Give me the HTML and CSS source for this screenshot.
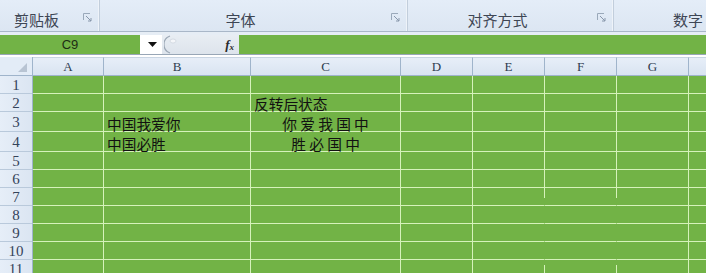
FILE: index.html
```html
<!DOCTYPE html>
<html lang="zh-CN">
<head>
<meta charset="utf-8">
<title>Excel</title>
<link rel="stylesheet" href="styles.css">
</head>
<body>
<div class="app">
  <div class="ribbon">
    <div class="group g1">
      <span class="glabel">剪贴板</span>
      <svg class="launcher" width="9" height="9" viewBox="0 0 9 9"><path d="M0.5 7V0.5H7" fill="none" stroke="#9aa9ba" stroke-width="1"/><path d="M3 3L8 8M5 8H8V5" fill="none" stroke="#8796aa" stroke-width="1"/></svg>
    </div>
    <div class="group g2">
      <span class="glabel">字体</span>
      <svg class="launcher" width="9" height="9" viewBox="0 0 9 9"><path d="M0.5 7V0.5H7" fill="none" stroke="#9aa9ba" stroke-width="1"/><path d="M3 3L8 8M5 8H8V5" fill="none" stroke="#8796aa" stroke-width="1"/></svg>
    </div>
    <div class="group g3">
      <span class="glabel">对齐方式</span>
      <svg class="launcher" width="9" height="9" viewBox="0 0 9 9"><path d="M0.5 7V0.5H7" fill="none" stroke="#9aa9ba" stroke-width="1"/><path d="M3 3L8 8M5 8H8V5" fill="none" stroke="#8796aa" stroke-width="1"/></svg>
    </div>
    <div class="group g4">
      <span class="glabel">数字</span>
    </div>
  </div>
  <div class="band"></div>
  <div class="fbar">
    <div class="namebox">C9</div>
    <div class="dropdown"><svg width="9" height="5" viewBox="0 0 9 5"><path d="M0 0H9L4.5 5Z" fill="#111"/></svg></div>
    <div class="formula">
      <svg class="knob" width="14" height="19" viewBox="0 0 14 19"><path d="M6 1A9 9 0 0 0 6 18" fill="none" stroke="#9aa6b4" stroke-width="1.2"/><ellipse cx="9" cy="6" rx="3" ry="2" fill="#f4f6f9" stroke="#c4ccd6" stroke-width="0.6"/></svg>
      <span class="fx">f<sub>x</sub></span>
    </div>
    <div class="fill"></div>
  </div>
  <div class="sheet">
    <div class="row hrow">
      <div class="rh corner"><span class="tri"></span></div>
      <div class="ch ca">A</div><div class="ch cb">B</div><div class="ch cc">C</div><div class="ch cd">D</div><div class="ch cd">E</div><div class="ch cd">F</div><div class="ch cd">G</div><div class="ch cd"></div>
    </div>
    <div class="row r18">
      <div class="rh">1</div>
      <div class="cell ca"></div><div class="cell cb"></div><div class="cell cc"></div><div class="cell cd"></div><div class="cell cd"></div><div class="cell cd"></div><div class="cell cd"></div><div class="cell cd"></div>
    </div>
    <div class="row r18">
      <div class="rh">2</div>
      <div class="cell ca"></div><div class="cell cb"></div><div class="cell cc"><span class="txt">反转后状态</span></div><div class="cell cd"></div><div class="cell cd"></div><div class="cell cd"></div><div class="cell cd"></div><div class="cell cd"></div>
    </div>
    <div class="row r20">
      <div class="rh">3</div>
      <div class="cell ca"></div><div class="cell cb"><span class="txt">中国我爱你</span></div><div class="cell cc center"><span class="txt spaced">你爱我国中</span></div><div class="cell cd"></div><div class="cell cd"></div><div class="cell cd"></div><div class="cell cd"></div><div class="cell cd"></div>
    </div>
    <div class="row r20">
      <div class="rh">4</div>
      <div class="cell ca"></div><div class="cell cb"><span class="txt">中国必胜</span></div><div class="cell cc center"><span class="txt spaced">胜必国中</span></div><div class="cell cd"></div><div class="cell cd"></div><div class="cell cd"></div><div class="cell cd"></div><div class="cell cd"></div>
    </div>
    <div class="row r18">
      <div class="rh">5</div>
      <div class="cell ca"></div><div class="cell cb"></div><div class="cell cc"></div><div class="cell cd"></div><div class="cell cd"></div><div class="cell cd"></div><div class="cell cd"></div><div class="cell cd"></div>
    </div>
    <div class="row r18">
      <div class="rh">6</div>
      <div class="cell ca"></div><div class="cell cb"></div><div class="cell cc"></div><div class="cell cd"></div><div class="cell cd"></div><div class="cell cd"></div><div class="cell cd"></div><div class="cell cd"></div>
    </div>
    <div class="row r18">
      <div class="rh">7</div>
      <div class="cell ca"></div><div class="cell cb"></div><div class="cell cc"></div><div class="cell cd"></div><div class="cell cd gaptop"></div><div class="cell cd gaptop"></div><div class="cell cd"></div><div class="cell cd"></div>
    </div>
    <div class="row r18">
      <div class="rh">8</div>
      <div class="cell ca"></div><div class="cell cb"></div><div class="cell cc"></div><div class="cell cd"></div><div class="cell cd gap"></div><div class="cell cd gap"></div><div class="cell cd"></div><div class="cell cd"></div>
    </div>
    <div class="row r18">
      <div class="rh">9</div>
      <div class="cell ca"></div><div class="cell cb"></div><div class="cell cc"></div><div class="cell cd"></div><div class="cell cd gap"></div><div class="cell cd gap"></div><div class="cell cd"></div><div class="cell cd"></div>
    </div>
    <div class="row r18">
      <div class="rh">10</div>
      <div class="cell ca"></div><div class="cell cb"></div><div class="cell cc"></div><div class="cell cd"></div><div class="cell cd gap"></div><div class="cell cd gap"></div><div class="cell cd"></div><div class="cell cd"></div>
    </div>
    <div class="row r18">
      <div class="rh">11</div>
      <div class="cell ca"></div><div class="cell cb"></div><div class="cell cc"></div><div class="cell cd"></div><div class="cell cd gapbot"></div><div class="cell cd gapbot"></div><div class="cell cd"></div><div class="cell cd"></div>
    </div>
  </div>
</div>
</body>
</html>
```
FILE: styles.css
```css
:root {
  --green: #72b346;
  --grid: #d6f2bb;
  --hdr-line: #9fb4cb;
}
* { box-sizing: border-box; }
html, body { margin: 0; padding: 0; }
body {
  width: 706px;
  height: 273px;
  overflow: hidden;
  background: #ffffff;
  font-family: "Noto Sans CJK SC", "Liberation Sans", sans-serif;
}
.app { width: 706px; }

/* ribbon */
.ribbon {
  display: flex;
  height: 32px;
  background: linear-gradient(#e4edf8, #dce6f2);
  border-bottom: 1px solid #a9b7c8;
}
.group {
  display: flex;
  align-items: flex-end;
  border-right: 1px solid #c2cedc;
  box-shadow: inset -1px 0 0 #eef3f9;
}
.g1 { width: 100px; }
.g2 { width: 308px; }
.g3 { width: 206px; }
.g4 { flex: 1; border-right: none; box-shadow: none; }
.glabel {
  flex: 1;
  text-align: center;
  font-size: 15px;
  line-height: 22px;
  padding-right: 10px;
  padding-bottom: 0;
  color: #3e4654;
  white-space: nowrap;
}
.g4 .glabel { text-align: left; padding-left: 59px; padding-right: 0; }
.launcher {
  align-self: flex-start;
  margin-top: 13px;
  margin-right: 7px;
  flex: none;
}
.band { height: 3px; background: #e6edf5; }

/* formula bar */
.fbar {
  display: flex;
  height: 20px;
  background: var(--green);
  border-bottom: 1px solid #98a6b6;
}
.namebox {
  width: 140px;
  text-align: center;
  font-family: "Liberation Sans", Arial, sans-serif;
  font-size: 13px;
  line-height: 19px;
  color: #1d2d14;
}
.dropdown {
  width: 22px;
  background: #ffffff;
  display: flex;
  align-items: center;
  justify-content: center;
  padding-left: 2px;
}
.formula {
  width: 77px;
  background: linear-gradient(#e8edf3, #dde4ec);
  display: flex;
  align-items: center;
  justify-content: space-between;
  padding-right: 5px;
}
.knob { margin-left: 2px; }
.fx {
  font-family: "Liberation Serif", serif;
  font-style: italic;
  font-weight: bold;
  font-size: 13px;
  color: #2a2a2a;
  line-height: 1;
}
.fx sub { font-size: 9px; vertical-align: -1px; }
.fill { flex: 1; }

/* sheet */
.sheet { margin-top: 2px; }
.row { display: flex; }
.hrow { height: 19px; }
.r18 { height: 18px; }
.r20 { height: 20px; }

.rh {
  width: 33px;
  flex: none;
  background: linear-gradient(to right, #e6eef8, #dbe5f2);
  border-right: 1px solid var(--hdr-line);
  border-bottom: 1px solid #b9c9db;
  display: flex;
  align-items: center;
  justify-content: center;
  font-family: "Liberation Serif", serif;
  font-size: 15px;
  color: #34435a;
  line-height: 1;
  padding-top: 1px;
}
.corner {
  position: relative;
  border-bottom: 1px solid var(--hdr-line);
  background: #e3ecf7;
}
.tri {
  position: absolute;
  right: 5px;
  bottom: 3px;
  width: 0;
  height: 0;
  border-left: 9px solid transparent;
  border-bottom: 9px solid #b8c4d3;
}
.ch {
  flex: none;
  background: linear-gradient(#e7eef8, #d9e4f1);
  border-right: 1px solid var(--hdr-line);
  border-bottom: 1px solid var(--hdr-line);
  border-top: 1px solid #c9d5e3;
  display: flex;
  align-items: center;
  justify-content: center;
  font-family: "Liberation Serif", serif;
  font-size: 13px;
  color: #2e3c50;
}
.ca { width: 71px; }
.cb { width: 147px; }
.cc { width: 150px; }
.cd { width: 72px; flex: none; }

.cell {
  flex: none;
  background-color: var(--green);
  border-right: 1px solid var(--grid);
  border-bottom: 1px solid var(--grid);
  display: flex;
  align-items: flex-end;
  padding-left: 3px;
  overflow: visible;
  white-space: nowrap;
}
.cell.center { justify-content: center; padding-left: 0; }
.txt {
  font-family: "Noto Sans CJK SC", sans-serif;
  font-size: 14.7px;
  line-height: 15px;
  color: #111111;
}
.spaced { letter-spacing: 3.3px; margin-right: -3.3px; }

.gap { border-right-color: transparent; }
.gaptop {
  border-right-color: transparent;
  background-image: linear-gradient(var(--grid), var(--grid));
  background-origin: border-box;
  background-repeat: no-repeat;
  background-position: right top;
  background-size: 1px 10px;
}
.gapbot {
  border-right-color: transparent;
  background-image: linear-gradient(var(--grid), var(--grid));
  background-origin: border-box;
  background-repeat: no-repeat;
  background-position: right 0 top 5px;
  background-size: 1px 100%;
}
```
